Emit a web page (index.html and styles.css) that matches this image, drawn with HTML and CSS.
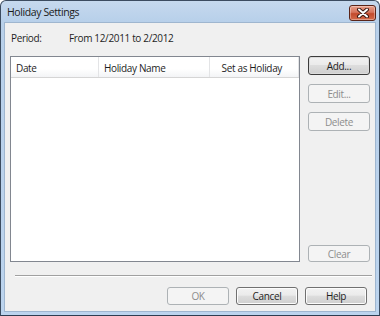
FILE: index.html
```html
<!DOCTYPE html>
<html lang="en">

<head>
    <meta charset="UTF-8">
    <title>Holiday Settings</title>
    <link rel="stylesheet" href="styles.css">
</head>

<body>
    <div class="window">
        <div class="titlebar">
            <span class="title">Holiday Settings</span>
            <div class="close-btn">
                <svg width="14" height="10" viewBox="0 0 14 10">
                    <path d="M3 1.5 L11 8.5 M11 1.5 L3 8.5" stroke="#3b1a14" stroke-width="4" stroke-linecap="round" />
                    <path d="M3 1.5 L11 8.5 M11 1.5 L3 8.5" stroke="#ffffff" stroke-width="2" stroke-linecap="round" />
                </svg>
            </div>
        </div>

        <div class="client">
            <div class="period">
                <span class="period-label">Period:</span>
                <span>From 12/2011 to 2/2012</span>
            </div>

            <div class="main">
                <div class="listview">
                    <div class="list-header">
                        <div class="col col-date">Date</div>
                        <div class="col col-name">Holiday Name</div>
                        <div class="col col-set">Set as Holiday</div>
                    </div>
                </div>
                <div class="side-buttons">
                    <button class="btn default">Add...</button>
                    <button class="btn" disabled>Edit...</button>
                    <button class="btn" disabled>Delete</button>
                    <button class="btn clear" disabled>Clear</button>
                </div>
            </div>

            <div class="separator"></div>

            <div class="footer">
                <button class="btn" disabled>OK</button>
                <button class="btn">Cancel</button>
                <button class="btn">Help</button>
            </div>
        </div>
    </div>
</body>
</html>
```

FILE: styles.css
```css
body {
    margin: 0;
    font-family: "Open Sans", "DejaVu Sans", sans-serif;
    font-size: 10px;
    letter-spacing: -0.35px;
    color: #1e1e1e;
}

.window {
    width: 380px;
    height: 316px;
    box-sizing: border-box;
    display: flex;
    flex-direction: column;
    border: 1px solid #3c4c60;
    border-bottom-color: #2e3d50;
    border-radius: 6px 6px 0 0;
    background: linear-gradient(#c6d9ee, #b8d0ea 20px, #bcd4ee);
    padding: 0 3px 3px 3px;
}

.titlebar {
    height: 21px;
    display: flex;
    align-items: center;
    justify-content: space-between;
    flex-shrink: 0;
}

.title {
    padding-left: 3px;
    padding-top: 1px;
    font-size: 10.5px;
    letter-spacing: -0.4px;
    color: #1a1a1a;
}

.close-btn {
    width: 25px;
    height: 14px;
    margin-top: 2px;
    border: 1px solid #5a2418;
    border-radius: 3px;
    background: linear-gradient(#e8a08c, #d6745c 45%, #c24a2c 55%, #d46a4a);
    box-shadow: inset 0 0 0 1px rgba(255, 255, 255, 0.35);
    display: flex;
    align-items: center;
    justify-content: center;
}

.client {
    flex: 1;
    background: #f0f0f0;
    border: 1px solid #9fb6cf;
    display: flex;
    flex-direction: column;
    padding: 0 9px 0 5px;
}

.period {
    display: flex;
    height: 29px;
    align-items: center;
    padding-left: 1px;
}

.period-label {
    width: 58px;
}

.main {
    display: flex;
    gap: 8px;
    height: 206px;
    margin-top: 4px;
}

.listview {
    width: 290px;
    box-sizing: border-box;
    border: 1px solid #828790;
    background: #ffffff;
}

.list-header {
    display: flex;
    height: 20px;
    border-bottom: 1px solid #d5d5d5;
    background: linear-gradient(#ffffff 60%, #f3f4f6);
}

.col {
    box-sizing: border-box;
    padding: 4px 5px 0 5px;
    border-right: 1px solid #e3e4e6;
}

.col-date {
    width: 88px;
}

.col-name {
    width: 111px;
}

.col-set {
    width: 89px;
    text-align: right;
    padding-right: 16px;
}

.side-buttons {
    display: flex;
    flex-direction: column;
    gap: 9px;
}

.btn {
    width: 62px;
    height: 19px;
    box-sizing: border-box;
    font-family: inherit;
    font-size: 10px;
    letter-spacing: -0.35px;
    color: #1e1e1e;
    border: 1px solid #707070;
    border-radius: 3px;
    background: linear-gradient(#f2f2f2, #ebebeb 45%, #dddddd 50%, #cfcfcf);
    box-shadow: inset 0 0 0 1px #fcfcfc;
    padding: 0;
}

.btn.default {
    border-color: #3c3c3c;
    box-shadow: inset 0 0 0 1px #dcdcdc;
}

.btn:disabled {
    color: #8d8d8d;
    border-color: #adb2b5;
    background: #f4f4f4;
    box-shadow: none;
}

.btn.clear {
    margin-top: auto;
    height: 17px;
}

.separator {
    margin: 13px 0 0 5px;
    width: 357px;
    border-top: 1px solid #a0a0a0;
    border-bottom: 1px solid #ffffff;
}

.footer {
    display: flex;
    justify-content: flex-end;
    gap: 7px;
    margin-top: 10px;
    margin-right: -1px;
}

.footer .btn {
    height: 18px;
}
```
